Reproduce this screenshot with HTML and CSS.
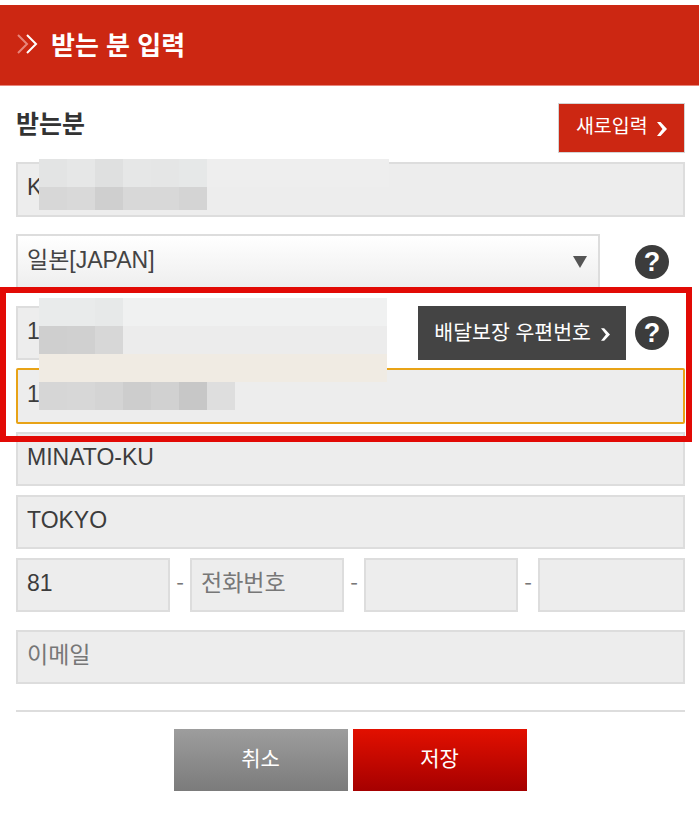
FILE: index.html
```html
<!DOCTYPE html>
<html lang="ko">
<head>
  <meta charset="UTF-8">
  <meta name="viewport" content="width=device-width, initial-scale=1.0">
  <title>받는 분 입력</title>
  <link rel="stylesheet" href="styles.css">
</head>
<body>
  <header class="page-header">
    <svg class="header-icon" width="22" height="22" viewBox="0 0 22 22" fill="none" stroke-width="2">
      <path d="M1 2l9 9-9 9" stroke="#e8857b"/>
      <path d="M10 2l9 9-9 9" stroke="#ffffff"/>
    </svg>
    <h1>받는 분 입력</h1>
  </header>

  <main class="content">
    <div class="title-row">
      <h2>받는분</h2>
      <button type="button" class="btn-new">새로입력
        <svg class="chev" width="10" height="14" viewBox="0 0 10 14" fill="#fff"><path d="M0 0h3.500L10 7l-6.500 7H0l5.500-7z"/></svg>
      </button>
    </div>

    <form class="address-form">
      <input class="field field-name" type="text" value="K">

      <div class="row row-country">
        <select class="field field-select">
          <option>일본[JAPAN]</option>
        </select>
        <span class="help">?</span>
      </div>

      <div class="row row-zip">
        <input class="field field-zip" type="text" value="1">
        <button type="button" class="btn-zip">배달보장 우편번호
          <svg class="chev chev-zip" width="9" height="13" viewBox="0 0 10 14" fill="#fff"><path d="M0 0h3.500L10 7l-6.500 7H0l5.500-7z"/></svg>
        </button>
        <span class="help help-zip">?</span>
      </div>

      <input class="field field-focus" type="text" value="1">
      <input class="field field-city" type="text" value="MINATO-KU">
      <input class="field field-next" type="text" value="TOKYO">

      <div class="row row-phone">
        <input class="field" type="text" value="81">
        <span class="dash">-</span>
        <input class="field" type="text" placeholder="전화번호">
        <span class="dash">-</span>
        <input class="field" type="text">
        <span class="dash">-</span>
        <input class="field field-last" type="text">
      </div>

      <input class="field field-email" type="text" placeholder="이메일">
    </form>

    <hr class="divider">

    <div class="actions">
      <button type="button" class="btn-cancel">취소</button>
      <button type="button" class="btn-save">저장</button>
    </div>
  </main>

  <!-- pixelated cover over the personal data -->
  <div class="mosaic mosaic-name">
    <i style="background:#e3e4e4"></i><i style="background:#e6e7e7"></i><i style="background:#dfe0e0"></i><i style="background:#e6e7e7"></i><i style="background:#e5e6e6"></i><i style="background:#e6e8e8"></i>
    <i style="background:#d7d7d7"></i><i style="background:#d9d9d9"></i><i style="background:#cfcfcf"></i><i style="background:#d8d8d8"></i><i style="background:#d8d8d8"></i><i style="background:#d4d4d4"></i>
  </div>
  <div class="mosaic mosaic-zip">
    <div class="mosaic-line line-top"><i style="background:#e9ebeb"></i><i style="background:#e9ebeb"></i><i style="background:#e7e9e9"></i></div>
    <div class="mosaic-line line-mid"><i style="background:#cfcfcf"></i><i style="background:#d0d0d0"></i><i style="background:#d7d7d7"></i></div>
    <div class="mosaic-line line-low"></div>
    <div class="mosaic-line line-addr"><i style="background:#d6d6d6"></i><i style="background:#d7d7d7"></i><i style="background:#d4d4d4"></i><i style="background:#cdcdcd"></i><i style="background:#d1d1d1"></i><i style="background:#c7c7c7"></i><i style="background:#dedede"></i></div>
  </div>

  <div class="highlight"></div>
</body>
</html>
```

FILE: styles.css
```css
* {
    box-sizing: border-box;
}

body {
    margin: 0;
    padding-top: 5px;
    background-color: #ffffff;
    color: #333333;
    font-family: "Noto Sans CJK KR", sans-serif;
}

.page-header {
    display: flex;
    align-items: center;
    height: 81px;
    padding: 0 0 3px 17px;
    background-color: #cc2712;
    border-bottom: 1px solid #e8857b;
}

.header-icon {
    margin-right: 12px;
}

.page-header h1 {
    margin: 0;
    color: #ffffff;
    font-size: 26px;
    font-weight: 700;
    line-height: 1;
}

.content {
    padding: 0 14px 0 16px;
}

.title-row {
    display: flex;
    align-items: center;
    justify-content: space-between;
    height: 76px;
}

.title-row h2 {
    margin: -4px 0 0 0;
    font-size: 25px;
    font-weight: 700;
}

button {
    font-family: inherit;
    cursor: pointer;
}

.btn-new {
    width: 127px;
    height: 50px;
    margin-top: 8px;
    padding: 0 0 7px;
    background-color: #cc2712;
    border: 1px solid #d4d4d4;
    color: #ffffff;
    font-size: 19.500px;
}

.chev {
    margin-left: 4px;
    vertical-align: -3px;
}

.chev-zip {
    vertical-align: -1px;
}

.address-form {
    display: flex;
    flex-direction: column;
}

.field {
    width: 100%;
    height: 54px;
    padding: 0 9px 4px;
    background-color: #ededed;
    border: 2px solid #dddddd;
    border-radius: 0;
    color: #3c3c3c;
    font-family: "Liberation Sans", "Noto Sans CJK KR", sans-serif;
    font-size: 23px;
    outline: none;
}

.field::placeholder {
    color: #777777;
    opacity: 1;
}

.field-name {
    height: 55px;
}

.row {
    display: flex;
    align-items: center;
}

.row-country {
    margin-top: 17px;
}

.field-select {
    flex: none;
    width: 584px;
    height: 55px;
    background: url("data:image/svg+xml,%3Csvg xmlns='http://www.w3.org/2000/svg' width='14' height='12'%3E%3Cpath d='M0 0h14L7 12z' fill='%23555'/%3E%3C/svg%3E") no-repeat right 11px center, linear-gradient(#ffffff, #eeeeee);
    appearance: none;
    color: #444444;
}

.help {
    display: block;
    flex: none;
    width: 34px;
    height: 34px;
    margin-left: 35px;
    background-color: #3c3c3c;
    border-radius: 50%;
    color: #ffffff;
    font-family: "Liberation Sans", sans-serif;
    font-size: 27px;
    font-weight: 700;
    line-height: 34px;
    text-align: center;
}

.row-zip {
    margin-top: 17px;
}

.field-zip {
    flex: none;
    width: 370px;
}

.btn-zip {
    flex: none;
    width: 208px;
    height: 54px;
    margin-left: 32px;
    padding: 0 0 4px;
    background-color: #444444;
    border: none;
    color: #ffffff;
    font-size: 20.500px;
}

.help-zip {
    margin-left: 9px;
}

.field-focus {
    height: 56px;
    margin-top: 8px;
    border: 2px solid #e8a317;
    border-radius: 2px;
}

.field-city {
    margin-top: 8px;
}

.field-next {
    margin-top: 9px;
}

.row-phone {
    margin-top: 9px;
}

.row-phone .field {
    flex: none;
    width: 154px;
}

.row-phone .field-last {
    width: 147px;
}

.dash {
    flex: none;
    width: 20px;
    margin-top: -6px;
    color: #777777;
    font-size: 22px;
    text-align: center;
}

.field-email {
    margin-top: 18px;
}

.divider {
    height: 2px;
    margin: 26px 0 17px;
    background-color: #dddddd;
    border: none;
}

.actions {
    display: flex;
    justify-content: center;
    gap: 5px;
    margin-left: -1px;
    padding-bottom: 23px;
}

.actions button {
    width: 174px;
    height: 62px;
    padding: 0 0 6px;
    border: none;
    color: #ffffff;
    font-size: 21px;
}

.btn-cancel {
    background: linear-gradient(#9d9d9d, #7b7b7b);
}

.btn-save {
    background: linear-gradient(#e21000, #a50000);
}

.mosaic {
    position: absolute;
    left: 39px;
    background-color: #eeeeee;
}

.mosaic i {
    display: block;
    width: 28px;
    height: 100%;
}

.mosaic-name {
    top: 159px;
    display: grid;
    grid-template-columns: repeat(6, 28px);
    grid-template-rows: 28px 23px;
    width: 350px;
    background: linear-gradient(#eeeeee 28px, transparent 28px);
}

.mosaic-zip {
    top: 298px;
    width: 348px;
    background: none;
}

.mosaic-line {
    display: flex;
    height: 28px;
}

.line-top {
    background-color: #f0f1f1;
}

.line-mid {
    background-color: #ececec;
}

.line-low {
    background-color: #f0ebe3;
}

.highlight {
    position: absolute;
    top: 287px;
    left: 0;
    width: 692px;
    height: 155px;
    border: 6px solid #e20a05;
}
```
